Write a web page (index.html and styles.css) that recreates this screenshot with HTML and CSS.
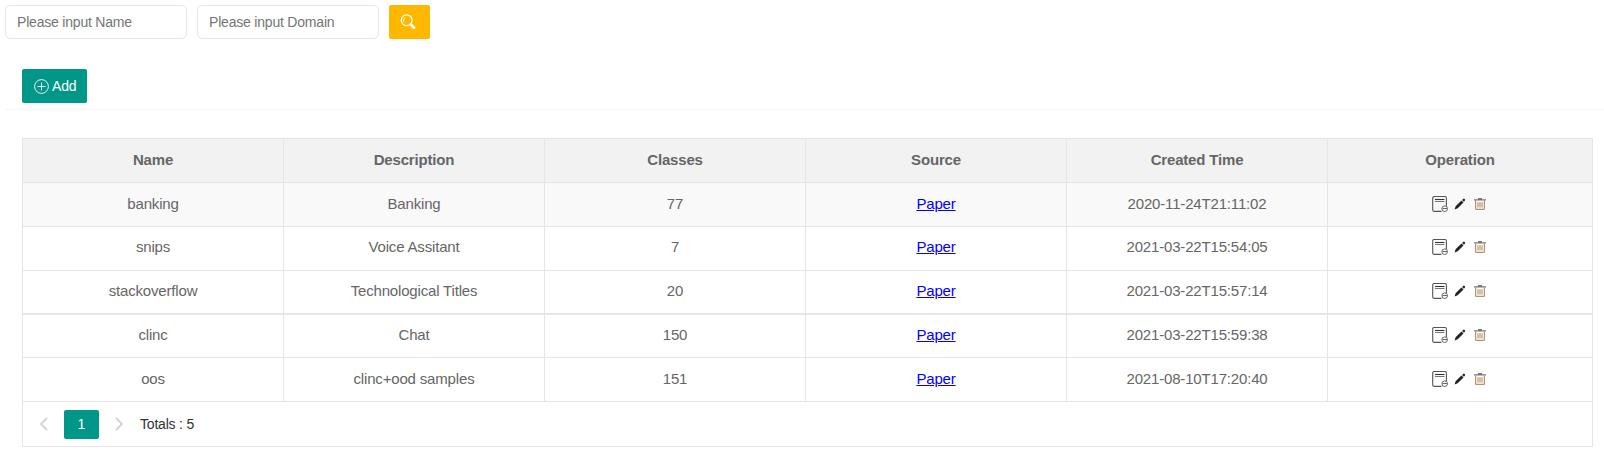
FILE: index.html
```
<!DOCTYPE html>
<html lang="en">
<head>
<meta charset="utf-8">
<title>Datasets</title>
<link rel="stylesheet" href="styles.css">
</head>
<body>
<svg class="sprite" width="0" height="0">
  <symbol id="doc" viewBox="0 0 16 16"><path d="M9.5 15.4H2.2Q.7 15.4.7 14V2Q.7.5 2.2.5H13Q14.4.5 14.4 2V10" fill="none" stroke="#555" stroke-width="1.1"/><path d="M3 3.5H12.5" stroke="#333" stroke-width="1.1"/><path d="M3 5.5H12.5" stroke="#777"/><circle cx="12.7" cy="12.7" r="2.8" fill="#fff" stroke="#666"/><path d="M10.5 12.5H15" stroke="#666"/></symbol>
  <symbol id="pen" viewBox="0 0 12 12"><path d="M.6 11.4 1.6 8.2 7.5 2.5 9.5 4.5 3.7 10.3Z M8.1 1.9 9.2.9Q9.9.3 10.7 1 11.5 1.8 10.9 2.6L10 3.8Z" fill="#222"/></symbol>
  <symbol id="bin" viewBox="0 0 12 12"><path d="M0 1.9H12M4 .6H8" stroke="#777" stroke-width="1.2"/><path d="M1.6 2.5V10.4Q1.6 11.3 2.5 11.3H9.5Q10.4 11.3 10.4 10.4V2.5" fill="none" stroke="#b09270" stroke-width="1.2"/><path d="M4 4.3V9.5M6 4.3V9.5M8 4.3V9.5" stroke="#b58c58" stroke-width="1.1"/></symbol>
</svg>
<form class="search">
  <input class="field" type="text" placeholder="Please input Name">
  <input class="field" type="text" placeholder="Please input Domain">
  <button class="btn btn-search" type="button" aria-label="Search"><svg width="16" height="16" viewBox="0 0 16 16" fill="none" stroke="#fff"><circle cx="6.7" cy="6.3" r="5.4" stroke-width="1.2"/><path d="M3.8 7.8Q3.1 5.5 4.8 3.8" stroke-width=".8"/><path d="M10.8 10.5 14 13.7" stroke-width="2.7" stroke-linecap="round"/></svg></button>
</form>
<div class="toolbar">
  <button class="btn btn-add" type="button"><svg width="15" height="15" viewBox="0 0 15 15" fill="none" stroke="#fff"><circle cx="7.5" cy="7.5" r="6.9" stroke-width=".9"/><path d="M7.5 3.5V11.5M3.5 7.5H11.5" stroke-width=".9"/></svg><span>Add</span></button>
</div>
<div class="panel">
  <table class="grid">
    <thead><tr><th>Name</th><th>Description</th><th>Classes</th><th>Source</th><th>Created Time</th><th class="last">Operation</th></tr></thead>
    <tbody>
      <tr class="hover"><td>banking</td><td>Banking</td><td>77</td><td><a href="#">Paper</a></td><td>2020-11-24T21:11:02</td><td><div class="ops"><svg class="doc"><use href="#doc"/></svg><svg class="pen"><use href="#pen"/></svg><svg class="bin"><use href="#bin"/></svg></div></td></tr>
      <tr class="up"><td>snips</td><td>Voice Assitant</td><td>7</td><td><a href="#">Paper</a></td><td>2021-03-22T15:54:05</td><td><div class="ops"><svg class="doc"><use href="#doc"/></svg><svg class="pen"><use href="#pen"/></svg><svg class="bin"><use href="#bin"/></svg></div></td></tr>
      <tr class="up thick"><td>stackoverflow</td><td>Technological Titles</td><td>20</td><td><a href="#">Paper</a></td><td>2021-03-22T15:57:14</td><td><div class="ops"><svg class="doc"><use href="#doc"/></svg><svg class="pen"><use href="#pen"/></svg><svg class="bin"><use href="#bin"/></svg></div></td></tr>
      <tr class="up short"><td>clinc</td><td>Chat</td><td>150</td><td><a href="#">Paper</a></td><td>2021-03-22T15:59:38</td><td><div class="ops"><svg class="doc"><use href="#doc"/></svg><svg class="pen"><use href="#pen"/></svg><svg class="bin"><use href="#bin"/></svg></div></td></tr>
      <tr><td>oos</td><td>clinc+ood samples</td><td>151</td><td><a href="#">Paper</a></td><td>2021-08-10T17:20:40</td><td><div class="ops"><svg class="doc"><use href="#doc"/></svg><svg class="pen"><use href="#pen"/></svg><svg class="bin"><use href="#bin"/></svg></div></td></tr>
    </tbody>
  </table>
  <div class="pager">
    <svg width="8" height="14" viewBox="0 0 8 14"><path d="M7 1 1 7 7 13"/></svg>
    <span class="page">1</span>
    <svg width="8" height="14" viewBox="0 0 8 14"><path d="M1 1 7 7 1 13"/></svg>
    <span class="total">Totals : 5</span>
  </div>
</div>
</body>
</html>
```
FILE: styles.css
```
* { box-sizing: border-box; }
body { margin: 0; padding: 5px 0 0 5px; background: #fff; color: #333; font-family: "Liberation Sans", Arial, sans-serif; font-size: 14px; overflow: hidden; }
.sprite { display: block; height: 0; }
.search { display: flex; gap: 10px; height: 34px; }
.field { width: 182px; height: 34px; padding: 0 11px; border: 1px solid #e6e6e6; border-radius: 5px; font: inherit; letter-spacing: -0.2px; background: #fff; }
.field::placeholder { color: #757575; opacity: 1; }
.btn { display: flex; align-items: center; height: 34px; border: 0; border-radius: 2px; color: #fff; font: inherit; letter-spacing: -0.2px; }
.btn-search { width: 41px; padding: 0 0 1px 11px; background: #ffb800; }
.toolbar { height: 71px; padding: 30px 0 0 17px; border-bottom: 1px solid #f6f6f6; }
.btn-add { width: 65px; padding: 0 0 0 12px; gap: 3px; background: #009688; }
.panel { width: 1571px; margin: 28px 0 0 17px; border: 1px solid #e6e6e6; }
.grid { width: 1569px; table-layout: fixed; border-collapse: separate; border-spacing: 0; font-size: 15px; line-height: 17px; letter-spacing: -0.17px; color: #666; text-align: center; }
.grid th, .grid td { height: 44px; padding: 12px 0 0; vertical-align: top; border: 0 solid #e6e6e6; border-width: 0 1px 1px 0; }
.grid th { width: 261px; background: #f2f2f2; font-weight: bold; }
.grid th.last { width: 264px; }
.grid th:last-child, .grid td:last-child { border-right: 0; }
.grid .hover td { background: #f9f9f9; }
.grid .up td { padding-top: 11px; }
.grid .thick td { border-bottom-width: 2px; }
.grid .short td { height: 43px; }
.grid a { color: #00f; }
.ops { display: flex; align-items: center; padding: 1px 0 0 104px; }
.doc { width: 16px; height: 16px; }
.pen { width: 12px; height: 12px; margin-left: 6px; }
.bin { width: 12px; height: 12px; margin-left: 8px; }
.pager { display: flex; align-items: center; height: 44px; padding: 0 0 0 17px; }
.pager path { fill: none; stroke: #d2d2d2; stroke-width: 1.8; }
.page { width: 35px; height: 29px; margin: 1px 16px 0; border-radius: 2px; background: #009688; color: #fff; line-height: 29px; text-align: center; }
.total { margin-left: 17px; letter-spacing: -0.2px; }
```
